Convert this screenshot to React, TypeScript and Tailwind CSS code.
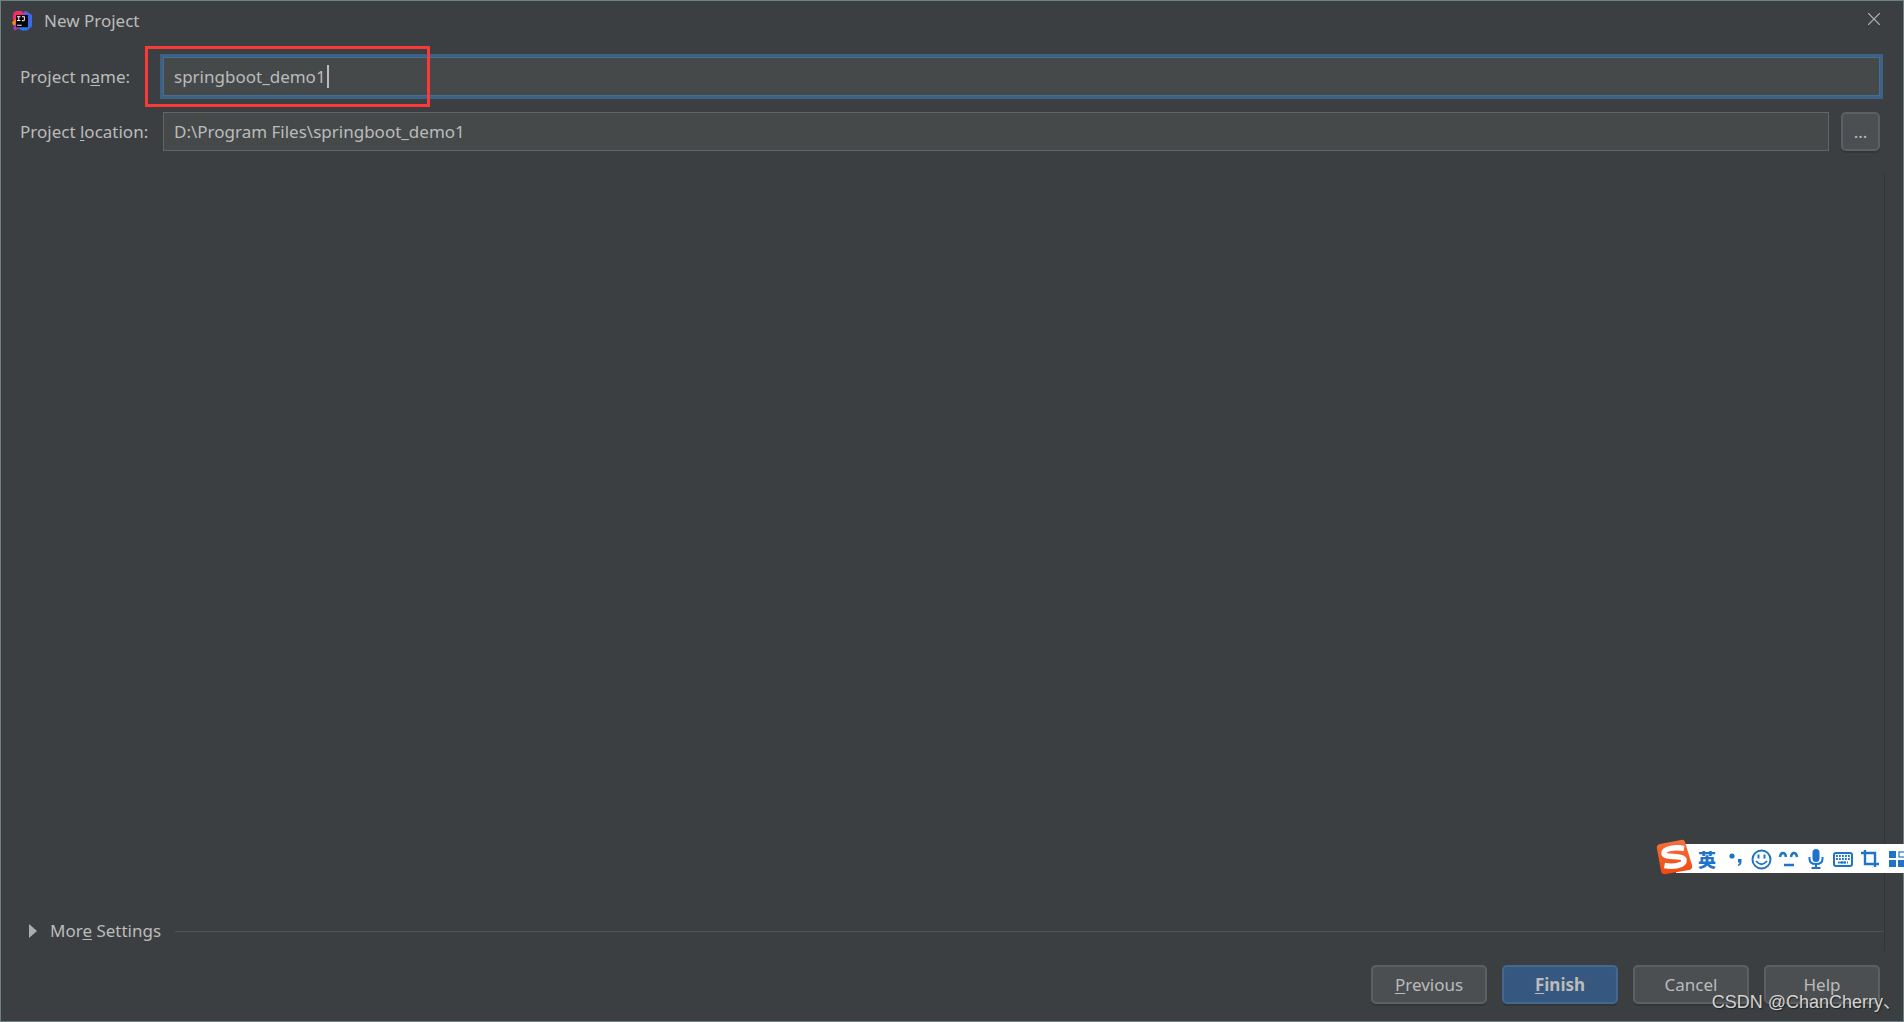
import { useState, type ReactNode } from 'react'

const buttonBase =
  'h-[39px] rounded-[5px] border-2 border-[#5c6062] bg-[#4b4f51] text-[#bbbbbb] shadow-[0_2px_1px_rgba(0,0,0,0.15)]'

function Mnemonic({ children }: { children: ReactNode }) {
  return <span className="underline decoration-1 underline-offset-2">{children}</span>
}

function IdeaLogo() {
  return (
    <svg viewBox="0 0 64 64" className="h-5 w-5" aria-hidden="true">
      <defs>
        <linearGradient id="ij-blue" x1="0" y1="0" x2="1" y2="1">
          <stop offset="0" stopColor="#7a52d6" />
          <stop offset="0.5" stopColor="#3f62e8" />
          <stop offset="1" stopColor="#2f7bea" />
        </linearGradient>
        <linearGradient id="ij-pink" x1="0" y1="0" x2="1" y2="1">
          <stop offset="0" stopColor="#fe2d6b" />
          <stop offset="1" stopColor="#e52a6d" />
        </linearGradient>
        <linearGradient id="ij-orange" x1="0" y1="0" x2="0" y2="1">
          <stop offset="0" stopColor="#fe7a1c" />
          <stop offset="1" stopColor="#f58a1f" />
        </linearGradient>
      </defs>
      <path d="M36 3l9-3 19 13v36L47 63l-10-4z" fill="url(#ij-blue)" />
      <path d="M37 64L15 54l24-6 14 6z" fill="#2878ee" />
      <path d="M5 5l8-5h18l9 14-28 24L3 26z" fill="url(#ij-pink)" />
      <path d="M0 36l12-11v20L4 46z" fill="url(#ij-orange)" />
      <path d="M12 42l16 10-20 10-4-8z" fill="#a63ac4" />
      <rect x="13" y="13" width="38" height="39" fill="#050505" />
      <path
        d="M16 17h11v3h-4v9h4v3H16v-3h4v-9h-4zM32 17h9v11c0 3-2 5-5 5-2 0-4-1-5-3l2-2c1 1 2 2 3 2s2-1 2-3v-7h-6z"
        fill="#fff"
      />
      <path d="M16 44h15v3H16z" fill="#fff" />
    </svg>
  )
}

function SogouLogo() {
  return (
    <svg viewBox="0 0 36 36" className="absolute -bottom-0.5 left-0 h-9 w-9" aria-hidden="true">
      <defs>
        <linearGradient id="sogou" x1="0" y1="0" x2="0" y2="1">
          <stop offset="0" stopColor="#f5703c" />
          <stop offset="1" stopColor="#f04a10" />
        </linearGradient>
      </defs>
      <path
        d="M4 5L25 1q3-1 4 2l7 23q1 4-3 5L10 35q-4 1-5-3L1 10Q0 6 4 5z"
        fill="url(#sogou)"
      />
      <path
        d="M28 9.500C20 8 7.500 9 8 14.500C8.500 19.500 27.500 15.500 28 21C28.500 27 17 28 8.500 26.500"
        fill="none"
        stroke="#fff"
        strokeWidth="5.500"
      />
    </svg>
  )
}

function ImeToolbar() {
  return (
    <div className="absolute -right-px bottom-[148px] flex h-[35px] w-[248px] items-end">
      <div className="ml-[20px] flex h-[29px] flex-1 items-center overflow-hidden bg-white pl-[22px] text-[#1f74c9]">
        <span className="w-[26px] shrink-0 font-['Noto_Sans_CJK_SC',sans-serif] text-[18px] leading-[28px] font-black">英</span>
        <svg viewBox="0 0 184 29" className="h-[29px] w-[184px] shrink-0" fill="none" stroke="currentColor" aria-hidden="true">
          <circle cx="8" cy="12" r="2.600" fill="currentColor" stroke="none" />
          <path d="M14 15h3.500v3q0 3-3.500 4v-1.500q1.500-.5 1.500-2H14z" fill="currentColor" stroke="none" />
          <circle cx="37.500" cy="15.500" r="9" strokeWidth="2" />
          <path d="M34.500 10.500v4M40.500 10.500v4" strokeWidth="2" />
          <path d="M32 17q5.500 6.500 11 0" strokeWidth="1.800" />
          <path d="M56 13q.5-4 3-4t3 4M67 13q.5-4 3-4t3 4M60 21h10" strokeWidth="2.400" />
          <rect x="88.500" y="5" width="7" height="13" rx="3.500" fill="currentColor" stroke="none" />
          <path d="M85.500 13v2q0 5 6.500 5t6.500-5v-2M92 20v4M87.500 24h9" strokeWidth="2" />
          <rect x="110" y="9" width="18" height="13" rx="2" strokeWidth="2" />
          <path d="M112 12h14M112 15h14M114 18.500h10" strokeWidth="1.800" strokeDasharray="1.800 1.200" />
          <path d="M116 18.500h6" strokeWidth="1.800" />
          <path d="M141 6v14h14M137 9h14v14" strokeWidth="2.400" />
          <path d="M165 7h7v7h-7zM165 16h7v7h-7zM174 16h7v7h-7z" fill="currentColor" stroke="none" />
          <rect x="175" y="8" width="7" height="5" strokeWidth="1.200" />
        </svg>
      </div>
      <SogouLogo />
    </div>
  )
}

export default function App() {
  const [name, setName] = useState('springboot_demo1')
  const [location, setLocation] = useState('D:\\Program Files\\springboot_demo1')

  return (
    <div className="relative flex min-h-screen flex-col border border-[#6f8083] bg-[#3c3f41] font-['Noto_Sans','Noto_Sans_CJK_SC',sans-serif] text-[17px] leading-6 text-[#bbbbbb]">
      {/* Title bar */}
      <header className="flex h-10 items-center justify-between pr-[23px] pl-[11px]">
        <div className="flex items-center gap-3">
          <IdeaLogo />
          <h1>New Project</h1>
        </div>
        <button type="button" aria-label="Close" className="h-6 w-3">
          <svg viewBox="0 0 12 12" className="mb-1 h-3 w-3" fill="none" stroke="#b4b6b7" strokeWidth="1.200" aria-hidden="true">
            <path d="M0 0l12 12M12 0L0 12" />
          </svg>
        </button>
      </header>

      {/* Project fields */}
      <div className="flex flex-col gap-4 pt-4 pr-[23px] pl-[19px]">
        <div className="relative flex items-center">
          <label htmlFor="project-name" className="w-[143px] shrink-0">
            Project n<Mnemonic>a</Mnemonic>me:
          </label>
          <input
            id="project-name"
            value={name}
            onChange={(e) => setName(e.target.value)}
            className="h-[39px] min-w-0 flex-1 border border-[#466d94] bg-[#45494a] px-[10px] ring-[3px] ring-[#3d6185] outline-none"
          />
          <span className="absolute top-2 left-[307px] h-[23px] w-[2px] bg-[#bbbbbb]" />
          <div className="absolute -top-[11px] left-[125px] h-[61px] w-[285px] border-[3px] border-[#fb3a38]" />
        </div>
        <div className="flex items-center">
          <label htmlFor="project-location" className="w-[143px] shrink-0">
            Project <Mnemonic>l</Mnemonic>ocation:
          </label>
          <input
            id="project-location"
            value={location}
            onChange={(e) => setLocation(e.target.value)}
            className="h-[39px] min-w-0 flex-1 border border-[#646464] bg-[#45494a] px-[10px] outline-none"
          />
          <button type="button" aria-label="Browse" className={`${buttonBase} ml-3 w-[39px]`}>
            ...
          </button>
        </div>
      </div>

      {/* Empty settings area */}
      <main className="mt-[23px] mr-[18px] flex flex-1 flex-col justify-end border-r border-[#323537] pb-2">
        <button type="button" className="flex items-center pl-7 text-left">
          <svg viewBox="0 0 8 14" className="mr-[13px] h-[14px] w-2" fill="#adadad" aria-hidden="true">
            <path d="M0 0l8 7-8 7z" />
          </svg>
          <span>
            Mor<Mnemonic>e</Mnemonic> Settings
          </span>
          <span className="ml-[14px] h-px flex-1 bg-[#515456]" />
        </button>
      </main>

      {/* Dialog buttons */}
      <footer className="flex justify-end gap-[15px] pt-[14px] pr-[23px] pb-[17px]">
        <button type="button" className={`${buttonBase} w-[116px]`}>
          <Mnemonic>P</Mnemonic>revious
        </button>
        <button
          type="button"
          className="h-[39px] w-[116px] rounded-[5px] border-2 border-[#44688f] bg-[#365880] font-bold text-[#bbbbbb] shadow-[0_2px_1px_rgba(0,0,0,0.15)]"
        >
          <Mnemonic>F</Mnemonic>inish
        </button>
        <button type="button" className={`${buttonBase} w-[116px]`}>Cancel</button>
        <button type="button" className={`${buttonBase} w-[116px]`}>Help</button>
      </footer>

      <ImeToolbar />

      <p className="pointer-events-none absolute right-0.5 bottom-[7px] font-['Liberation_Sans','Noto_Sans_CJK_SC',sans-serif] text-[18px] leading-6 text-[#d4d4d4] [text-shadow:1px_1px_1px_#222]">
        CSDN @ChanCherry、
      </p>
    </div>
  )
}
